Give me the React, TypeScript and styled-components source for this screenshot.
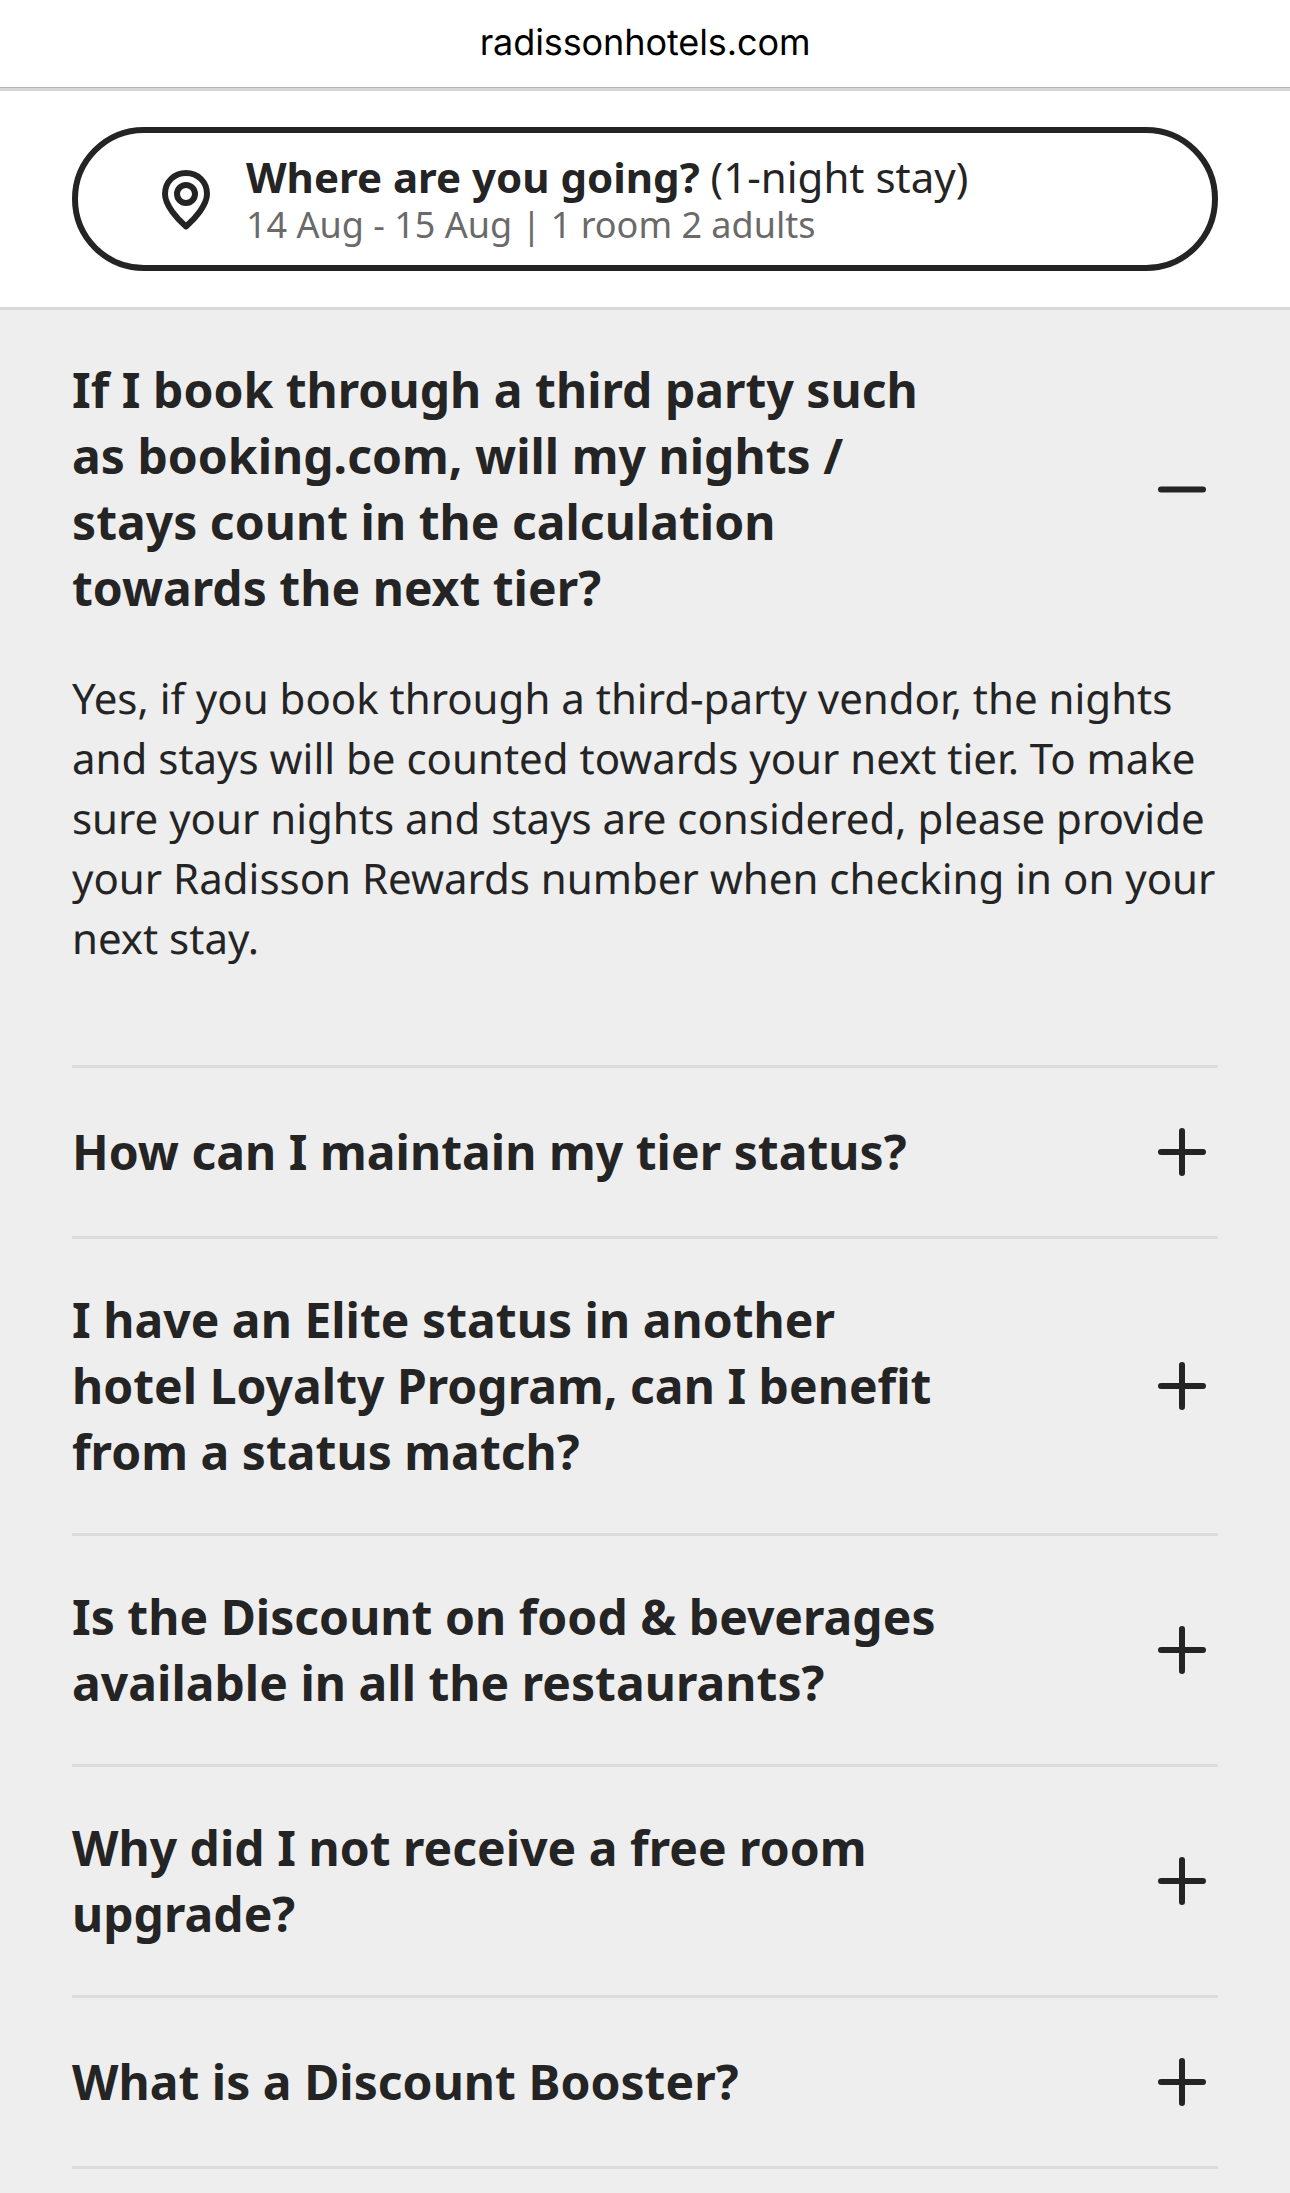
import React, { useState } from "react";
import styled, { createGlobalStyle } from "styled-components";

const Global = createGlobalStyle`
  * { box-sizing: border-box; }
  body { margin: 0; background: #eeeeee; color: #242424; font-family: "Noto Sans", sans-serif; text-rendering: geometricPrecision; }
  h2, p { margin: 0; }
`;
const Page = styled.div`
  height: 2193px;
  overflow: hidden;
  background: #eeeeee;
`;
const AddressBar = styled.header`
  height: 91px;
  background: #ffffff;
  border-bottom: 3px solid #d7d7d7;
  box-shadow: inset 0 -1px 0 #b2b2b2;
  display: flex;
  justify-content: center;
  padding-top: 20px;
  font: 400 36px/44px Inter, sans-serif;
  letter-spacing: -0.1px;
  color: #000000;
`;
const SearchBar = styled.div`
  height: 219px;
  background: #ffffff;
  border-bottom: 3px solid #d7d8d7;
  padding: 36px 72px 0;
`;
const SearchPill = styled.button`
  width: 100%;
  height: 144px;
  border: 6px solid #242424;
  border-radius: 72px;
  background: #ffffff;
  display: flex;
  align-items: center;
  gap: 24px;
  padding: 0 72px;
  text-align: left;
  font-family: inherit;
  color: #242424;
`;
const SearchText = styled.div`
  display: flex;
  flex-direction: column;
  padding-top: 2px;
`;
const Destination = styled.div`
  font-size: 42px;
  line-height: 49px;
`;
const Dates = styled.div`
  font-size: 36px;
  line-height: 47px;
  color: #6a6a6a;
`;
const List = styled.main`
  padding: 0 72px;
`;
const Item = styled.section<{ $open?: boolean }>`
  border-bottom: 3px solid #dbdcdb;
  padding: ${(p) => (p.$open ? "47px 0 96px" : "48px 0")};
`;
const Question = styled.button`
  width: 100%;
  border: 0;
  padding: 0;
  background: none;
  display: flex;
  justify-content: space-between;
  align-items: center;
  text-align: left;
  font: 700 48px/66px "Noto Sans", sans-serif;
  letter-spacing: 0.03px;
  color: #242424;
`;
const Title = styled.span`
  white-space: pre-line;
`;
const Answer = styled.p`
  margin-top: 48px;
  white-space: pre;
  font-size: 42px;
  line-height: 60px;
`;
const Toggle = styled.svg`
  width: 72px;
  height: 72px;
  flex: none;
`;

const faqs = [
  {
    q: "If I book through a third party such\nas booking.com, will my nights /\nstays count in the calculation\ntowards the next tier?",
    a: "Yes, if you book through a third-party vendor, the nights\nand stays will be counted towards your next tier. To make\nsure your nights and stays are considered, please provide\nyour Radisson Rewards number when checking in on your\nnext stay.",
  },
  { q: "How can I maintain my tier status?" },
  { q: "I have an Elite status in another\nhotel Loyalty Program, can I benefit\nfrom a status match?" },
  { q: "Is the Discount on food & beverages\navailable in all the restaurants?" },
  { q: "Why did I not receive a free room\nupgrade?" },
  { q: "What is a Discount Booster?" },
];

export default function App() {
  const [open, setOpen] = useState(0);
  return (
    <Page>
      <Global />
      <AddressBar>radissonhotels.com</AddressBar>
      <SearchBar>
        <SearchPill>
          <svg width="72" height="72" viewBox="0 0 72 72" fill="none" stroke="#242424" strokeWidth="6">
            <path d="M36 63.5C28 56.5 15 42.5 15 31C15 19 24 10 36 10S57 19 57 31C57 42.5 44 56.5 36 63.5Z" strokeLinejoin="round" />
            <circle cx="36" cy="31" r="9" />
          </svg>
          <SearchText>
            <Destination><b>Where are you going?</b> (1-night stay)</Destination>
            <Dates>14 Aug - 15 Aug | 1 room 2 adults</Dates>
          </SearchText>
        </SearchPill>
      </SearchBar>
      <List>
        {faqs.map((f, i) => (
          <Item key={f.q} $open={open === i}>
            <Question onClick={() => setOpen(open === i ? -1 : i)}>
              <Title>{f.q}</Title>
              <Toggle viewBox="0 0 72 72" stroke="#242424" strokeWidth="6" strokeLinecap="round">
                <path d={open === i ? "M15 36.6H57" : "M15 36H57M36 15V57"} />
              </Toggle>
            </Question>
            {open === i && f.a && <Answer>{f.a}</Answer>}
          </Item>
        ))}
      </List>
    </Page>
  );
}
